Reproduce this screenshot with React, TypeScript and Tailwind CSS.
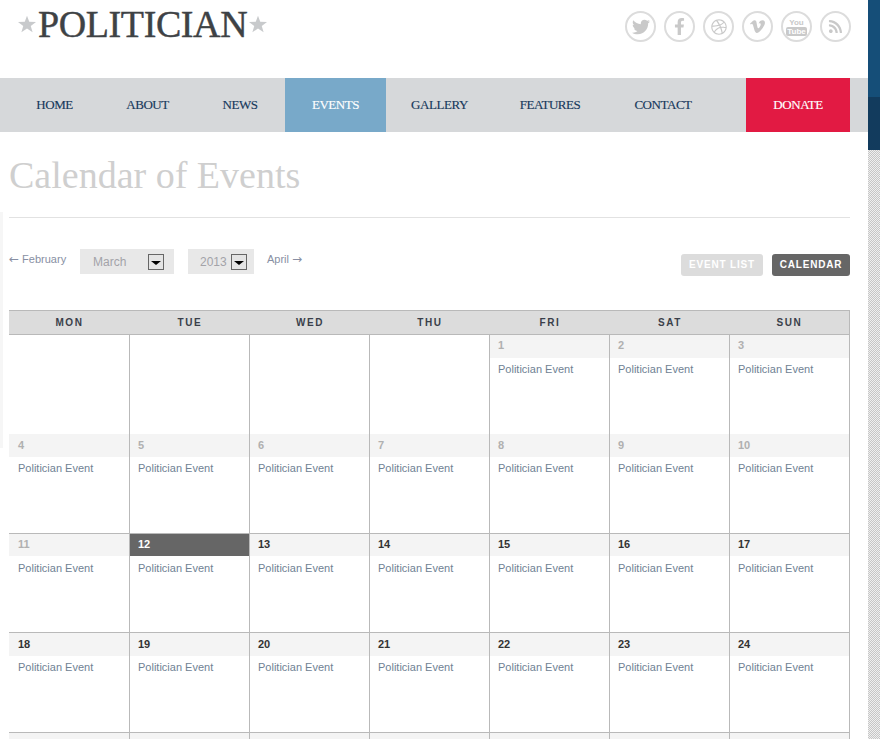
import { FaDribbble, FaFacebookF, FaRss, FaTwitter, FaVimeoV } from "react-icons/fa";

const navItems = [
  { label: "HOME", width: "w-[91px]" },
  { label: "ABOUT", width: "w-[95px]" },
  { label: "NEWS", width: "w-[90px]" },
  { label: "EVENTS", width: "w-[101px]" },
  { label: "GALLERY", width: "w-[107px]" },
  { label: "FEATURES", width: "w-[114px]" },
  { label: "CONTACT", width: "w-[112px]" },
];
const weekDays = ["MON", "TUE", "WED", "THU", "FRI", "SAT", "SUN"];

function Star() {
  return (
    <svg width="18" height="18" viewBox="0 0 24 24" className="shrink-0 fill-[#c8cacc]">
      <polygon points="12,1 15,9 24,9.2 17,14.6 19.5,23 12,18 4.5,23 7,14.6 0,9.2 9,9" />
    </svg>
  );
}

function SocialIcon({ children }: { children: React.ReactNode }) {
  return (
    <span className="flex h-[31px] w-[31px] items-center justify-center rounded-full border-2 border-[#dcdcdc] text-[#c9c9c9]">
      {children}
    </span>
  );
}

function SelectBox({ label, width, gap }: { label: string; width: string; gap: string }) {
  return (
    <div className={`flex h-[25px] items-center bg-[#e8e8e8] text-[12px] text-[#a3a3a8] ${width} ${gap}`}>
      <span>{label}</span>
      <span className="flex h-[16px] w-[16px] items-center justify-center border border-[#666] bg-[#e4e4e4]">
        <span className="mt-[2px] h-0 w-0 border-x-[5px] border-t-[4px] border-x-transparent border-t-black" />
      </span>
    </div>
  );
}

function DayCell({ day, rowClass, headClass, state, first }: { day?: number; rowClass: string; headClass: string; state: "blank" | "past" | "today" | "future"; first: boolean }) {
  if (state === "blank") {
    return <div className={`border-r border-[#b9b9b9] bg-white ${rowClass}`} />;
  }
  const head =
    state === "today"
      ? "bg-[#666] font-bold text-white"
      : state === "past"
        ? "bg-[#f4f4f4] font-bold text-[#b0b0b0]"
        : "bg-[#f4f4f4] font-bold text-[#333]";
  return (
    <div className={`border-r border-[#b9b9b9] bg-white ${rowClass}`}>
      <div className={`text-[11px] leading-[16px] ${headClass} ${first ? "pl-[9px]" : "pl-[8px]"} ${head}`}>{day}</div>
      <div className={`pt-[3px] text-[11px] leading-[16px] text-[#6f8294] ${first ? "pl-[9px]" : "pl-[8px]"}`}>Politician Event</div>
    </div>
  );
}

export default function App() {
  const weeks: { days: (number | null)[]; rowClass: string; headClass: string }[] = [
    { days: [null, null, null, null, 1, 2, 3], rowClass: "h-[99px]", headClass: "h-[23px] pt-[2px]" },
    { days: [4, 5, 6, 7, 8, 9, 10], rowClass: "h-[99px]", headClass: "h-[23px] pt-[3px]" },
    { days: [11, 12, 13, 14, 15, 16, 17], rowClass: "h-[99px] border-t", headClass: "h-[22px] pt-[2px] mb-[1px]" },
    { days: [18, 19, 20, 21, 22, 23, 24], rowClass: "h-[100px] border-t", headClass: "h-[23px] pt-[3px]" },
  ];

  return (
    <div className="relative flex h-[739px] w-[880px] overflow-hidden bg-white font-['Liberation_Sans',Arial,sans-serif]">
      <div className="absolute left-0 top-[212px] h-[236px] w-[3px] bg-[#f6f6f6]" />

      <main className="w-[868px] shrink-0">
        <header className="flex h-[78px] items-start justify-between pl-[18px] pr-[17px]">
          <div className="flex items-center pt-[2px] font-['Liberation_Serif','Times_New_Roman',serif] text-[38px] leading-[44px] tracking-[-0.4px] text-[#3e4245] [-webkit-text-stroke:0.4px_#3e4245]">
            <Star />
            <span className="mx-[2px]">POLITICIAN</span>
            <Star />
          </div>
          <div className="flex gap-[8px] pt-[11px]">
            <SocialIcon><FaTwitter size={18} /></SocialIcon>
            <SocialIcon><FaFacebookF size={17} /></SocialIcon>
            <SocialIcon><FaDribbble size={16} /></SocialIcon>
            <SocialIcon><FaVimeoV size={17} /></SocialIcon>
            <SocialIcon>
              <span className="flex flex-col items-center text-[8px] font-bold leading-[9px]">
                <span>You</span>
                <span className="rounded-[2px] bg-[#c9c9c9] px-[1px] text-white">Tube</span>
              </span>
            </SocialIcon>
            <SocialIcon><FaRss size={15} /></SocialIcon>
          </div>
        </header>

        <nav className="flex h-[54px] items-stretch bg-[#d6d8da] pl-[9px] pr-[18px] font-['Liberation_Serif','Times_New_Roman',serif] text-[13px] tracking-[-0.45px] text-[#17395c] [-webkit-text-stroke:0.15px]">
          {navItems.map((item) => (
            <a
              key={item.label}
              className={
                item.label === "EVENTS"
                  ? `flex items-center justify-center bg-[#78a9c9] text-white ${item.width}`
                  : `flex items-center justify-center ${item.width}`
              }
            >
              {item.label}
            </a>
          ))}
          <a className="ml-auto flex w-[104px] items-center justify-center bg-[#e21a43] text-white">DONATE</a>
        </nav>

        <div className="pl-[9px] pr-[18px]">
          <h1 className="border-b border-[#e2e2e2] pb-[19px] pt-[21px] font-['Liberation_Serif','Times_New_Roman',serif] text-[38px] leading-[45px] text-[#cfcfcf]">
            Calendar of Events
          </h1>

          <div className="flex h-[92px] items-start justify-between pt-[31px]">
            <div className="flex items-start text-[11px] text-[#888fa3]">
              <a className="mt-[2px] w-[71px] leading-[16px]">
                <span className="font-['DejaVu_Sans',sans-serif] text-[12px]">←</span> February
              </a>
              <SelectBox label="March" width="w-[94px]" gap="justify-between pl-[13px] pr-[10px]" />
              <div className="w-[14px]" />
              <SelectBox label="2013" width="w-[66px]" gap="gap-[4px] pl-[12px]" />
              <a className="ml-[13px] mt-[2px] leading-[16px]">
                April <span className="font-['DejaVu_Sans',sans-serif] text-[12px]">→</span>
              </a>
            </div>
            <div className="mt-[5px] flex gap-[9px] text-[10px] font-bold tracking-[0.8px] text-white">
              <a className="flex h-[22px] w-[82px] items-center justify-center rounded-[3px] bg-[#dcdcdc] pb-[1px]">EVENT LIST</a>
              <a className="flex h-[22px] w-[78px] items-center justify-center rounded-[3px] bg-[#666] pb-[1px]">CALENDAR</a>
            </div>
          </div>

          <div className="grid w-[841px] grid-cols-[121px_repeat(6,120px)] border-t border-[#b9b9b9]">
            {weekDays.map((day, index) => (
              <div
                key={day}
                className={`flex h-[24px] items-center justify-center border-b border-[#b9b9b9] bg-[#dcdcdc] text-[10px] font-bold tracking-[1.6px] text-[#3a3f4a] ${index === 6 ? "border-r" : ""}`}
              >
                {day}
              </div>
            ))}
            {weeks.map((week) =>
              week.days.map((day, index) => (
                <DayCell
                  key={`${week.rowClass}-${day ?? "x"}-${index}`}
                  day={day ?? undefined}
                  rowClass={week.rowClass}
                  headClass={week.headClass}
                  first={index === 0}
                  state={day === null ? "blank" : day < 12 ? "past" : day === 12 ? "today" : "future"}
                />
              )),
            )}
            {weekDays.map((day) => (
              <div key={day} className="h-[8px] border-r border-t border-[#b9b9b9] bg-[#f4f4f4]" />
            ))}
          </div>
        </div>
      </main>

      <aside className="flex w-[12px] flex-col">
        <div className="h-[97px] bg-[#154e78]" />
        <div className="h-[53px] bg-[#123b5d]" />
        <div className="flex-1 bg-[repeating-conic-gradient(#c6c6c6_0_25%,#efefef_0_50%)] bg-[length:2px_2px]" />
      </aside>
    </div>
  );
}
